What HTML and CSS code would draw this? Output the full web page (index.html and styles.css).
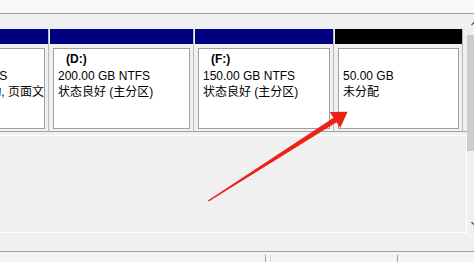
FILE: index.html
```html
<!DOCTYPE html>
<html lang="zh-CN">
<head>
<meta charset="utf-8">
<title>磁盘管理</title>
<link rel="stylesheet" href="styles.css">
</head>
<body>
<div class="top"></div>
<div class="main">
  <div class="content">
    <div class="disk1">
      <div class="parts">
        <div class="part first">
          <div class="hdr primary"></div>
          <div class="box">
            <div class="ln name">(C:)</div>
            <div class="ln">60.00 GB NTFS</div>
            <div class="ln">状态良好 (启动, 页面文件, 故障转储, 主分区)</div>
          </div>
        </div>
        <div class="part w2">
          <div class="hdr primary"></div>
          <div class="box">
            <div class="ln name">(D:)</div>
            <div class="ln">200.00 GB NTFS</div>
            <div class="ln">状态良好 (主分区)</div>
          </div>
        </div>
        <div class="part w3">
          <div class="hdr primary"></div>
          <div class="box">
            <div class="ln name">(F:)</div>
            <div class="ln">150.00 GB NTFS</div>
            <div class="ln">状态良好 (主分区)</div>
          </div>
        </div>
        <div class="part w4">
          <div class="hdr unalloc"></div>
          <div class="box">
            <div class="ln name"></div>
            <div class="ln">50.00 GB</div>
            <div class="ln">未分配</div>
          </div>
        </div>
      </div>
    </div>
    <div class="sep"></div>
    <div class="disk2"></div>
  </div>
  <div class="scroll">
    <svg class="sarrow" width="17" height="17" viewBox="0 0 17 17"><polyline points="4.5,11 8.5,7 12.5,11" fill="none" stroke="#606060" stroke-width="1.3"/></svg>
    <div class="thumb"></div>
    <div class="track"></div>
    <svg class="sarrow" width="17" height="17" viewBox="0 0 17 17"><polyline points="4.5,6 8.5,10 12.5,6" fill="none" stroke="#606060" stroke-width="1.3"/></svg>
  </div>
</div>
<div class="gap2"></div>
<div class="status">
  <div class="sb sb1"></div>
  <div class="sb sb2"></div>
  <div class="sb sb3"></div>
</div>
<svg class="overlay" width="474" height="262" viewBox="0 0 474 262">
  <polygon points="207.9,200.4 333.5,117.7 329.8,112 347.6,111.8 340.2,128 336.5,122.3 208.7,201.6" fill="#ec2218"/>
</svg>
</body>
</html>
```
FILE: styles.css
```css
html, body {
  margin: 0;
  padding: 0;
}
body {
  width: 474px;
  height: 262px;
  overflow: hidden;
  background: #f0f0f0;
  font-family: "Liberation Sans", "Noto Sans CJK SC", sans-serif;
  font-size: 12px;
  color: #000;
  position: relative;
}
.top {
  height: 13px;
  background: #f9f9f9;
  border-bottom: 1px solid #a0a0a0;
}
.main {
  display: flex;
  height: 219px;
  overflow: hidden;
}
.content {
  width: 467px;
  flex-shrink: 0;
  display: flex;
  flex-direction: column;
}
.disk1 {
  padding-top: 15px;
  border-bottom: 1px solid #a0a0a0;
  overflow: hidden;
}
.parts {
  display: flex;
}
.part {
  flex-shrink: 0;
  display: flex;
  flex-direction: column;
  border-right: 1px solid #b9b9b9;
  margin-right: 1px;
}
.first { width: 134px; margin-left: -86px; }
.w2 { width: 143px; }
.w3 { width: 138px; }
.w4 { width: 127px; }
.hdr {
  height: 15px;
}
.primary { background: #000080; }
.unalloc { background: #000; }
.box {
  margin: 4px 3px 2px 3px;
  height: 79px;
  border: 1px solid #a0a0a0;
  background: #fff;
  padding: 2px 0 0 4px;
  box-sizing: content-box;
  overflow: hidden;
}
.box { height: 77px; }
.ln {
  height: 16.5px;
  line-height: 16.5px;
  white-space: nowrap;
}
.name {
  font-weight: bold;
  padding-left: 8px;
}
.sep {
  height: 3px;
}
.disk2 {
  height: 98px;
  box-sizing: border-box;
  border-top: 1px solid #fff;
  border-bottom: 1px solid #fff;
  border-right: 1px solid #fff;
  background: #f0f0f0;
}
.scroll {
  width: 17px;
  flex-shrink: 0;
  display: flex;
  flex-direction: column;
  background: #f0f0f0;
}
.sarrow {
  display: block;
  flex-shrink: 0;
}
.thumb {
  height: 116px;
  margin: 4px 0 0 0;
  background: #cdcdcd;
}
.track {
  flex: 1;
}
.gap2 {
  height: 18px;
}
.status {
  border-top: 1px solid #a0a0a0;
  background: #f4f4f4;
  height: 10px;
  display: flex;
  padding-top: 3px;
}
.sb {
  height: 7px;
}
.sb1 {
  width: 265px;
  border-right: 1px solid #a0a0a0;
}
.sb2 {
  margin-left: 4px;
  width: 126px;
  border-left: 1px solid #dadada;
  border-right: 1px solid #a0a0a0;
}
.sb3 {
  flex: 1;
}
.overlay {
  position: absolute;
  left: 0;
  top: 0;
  pointer-events: none;
}
```
